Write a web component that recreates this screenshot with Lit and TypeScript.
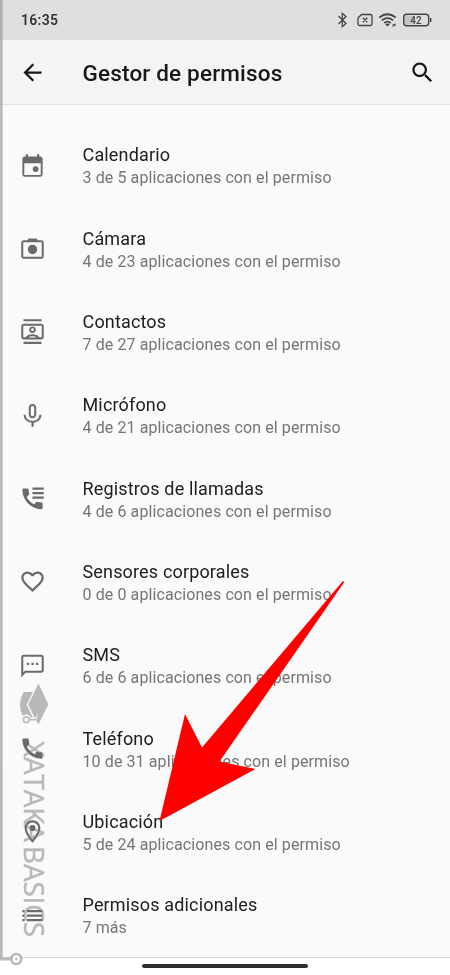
import { LitElement, html, css } from "lit";
import { customElement, property } from "lit/decorators.js";

const ICONS: Record<string, string> = {
  back: "M20 11H7.83l5.59-5.59L12 4l-8 8 8 8 1.41-1.41L7.83 13H20v-2z",
  search:
    "M15.5 14h-.79l-.28-.27C15.41 12.59 16 11.11 16 9.5 16 5.91 13.09 3 9.5 3S3 5.91 3 9.5 5.91 16 9.5 16c1.61 0 3.09-.59 4.23-1.57l.27.28v.79l5 4.99L20.49 19l-4.99-5zm-6 0C7.01 14 5 11.99 5 9.5S7.01 5 9.5 5 14 7.01 14 9.5 11.99 14 9.5 14z",
  calendar:
    "M19 4h-1V2h-2v2H8V2H6v2H5c-1.11 0-1.99.9-1.99 2L3 20c0 1.1.89 2 2 2h14c1.1 0 2-.9 2-2V6c0-1.1-.9-2-2-2zm0 16.500H4.700V10h14.600v10.500z M14.800 12.600a2.600 2.600 0 1 1 0 5.200a2.600 2.600 0 1 1 0-5.200z",
  camera:
    "M20 4.600h-3.170L15.500 3h-7L7.170 4.600H4c-1.100 0-2 .9-2 2v12.500c0 1.100.9 2 2 2h16c1.100 0 2-.9 2-2V6.600c0-1.100-.9-2-2-2zm.2 14.700H3.800V6.400h16.400v12.900z M12 8.600a4.200 4.200 0 1 0 0 8.400a4.200 4.200 0 1 0 0-8.400z",
  contacts:
    "M20 5H4c-1.100 0-2 .9-2 2v10c0 1.100.9 2 2 2h16c1.100 0 2-.9 2-2V7c0-1.100-.9-2-2-2zM8.500 17.300c.9-.7 2.100-1 3.500-1s2.600.3 3.500 1h-7zM20.200 17.200h-2.200c-.8-1.700-3.300-2.700-6-2.700s-5.200 1-6 2.700H3.800V6.800h16.400v10.400zM4 1h16v1.800H4zM4 21.200h16V23H4zM12 13.500c1.660 0 3-1.340 3-3s-1.340-3-3-3-3 1.340-3 3 1.340 3 3 3zm0-4.300c.7 0 1.300.6 1.300 1.300s-.6 1.300-1.300 1.300-1.300-.6-1.300-1.300.6-1.300 1.300-1.300z",
  mic: "M12 14.500c1.900 0 3.300-1.400 3.300-3.300V5c0-1.900-1.400-3.300-3.300-3.300S8.700 3.100 8.700 5v6.200c0 1.900 1.400 3.300 3.300 3.300zm-1.500-9.500c0-.9.6-1.500 1.500-1.500s1.500.6 1.500 1.500v6.200c0 .9-.6 1.500-1.500 1.500s-1.500-.6-1.500-1.500V5zM18.100 11.400c0 3.300-2.700 5.400-6.100 5.400s-6.100-2.100-6.100-5.400H4.100c0 3.700 2.900 6.500 7 7V22h1.900v-3.600c4.100-.5 7-3.300 7-7z",
  calls:
    "M12 2.300h10v1.900H12zM12 6.300h10v1.900H12zM12 10.300h10v1.900H12zM20 15.500c-1.250 0-2.450-.2-3.570-.57-.3-.1-.76-.02-1.020.24l-2 2c-2.830-1.440-5.150-3.750-6.590-6.580l2-2.010c.28-.27.36-.66.25-1.010C8.700 6.450 8.500 5.250 8.500 4c0-.55-.45-1-1-1H4c-.55 0-1 .45-1 1 0 9.390 7.610 17.500 17 17.500 .55 0 1-.45 1-1v-4c0-.55-.45-1-1-1z",
  heart:
    "M16.500 3c-1.740 0-3.410.81-4.500 2.090C10.910 3.810 9.240 3 7.500 3 4.420 3 2 5.420 2 8.500c0 3.780 3.400 6.860 8.550 11.540L12 21.350l1.450-1.320C18.600 15.360 22 12.280 22 8.500 22 5.420 19.580 3 16.500 3zm-4.400 15.550l-.1.100-.1-.1C7.140 14.240 4 11.390 4 8.500 4 6.500 5.500 5 7.500 5c1.540 0 3.040.99 3.570 2.360h1.870C13.460 5.990 14.960 5 16.500 5c2 0 3.500 1.500 3.500 3.500 0 2.890-3.140 5.740-7.900 10.050z",
  sms: "M20 2.500H4c-1.100 0-2 .9-2 2V22.500l4-4h14c1.100 0 2-.9 2-2v-12c0-1.100-.9-2-2-2zm.2 14.200H5.200L3.800 18V4.300h16.400v12.400zM7 9.500h2v2H7zM11 9.500h2v2h-2zM15 9.500h2v2h-2z",
  phone:
    "M20.010 15.380c-1.230 0-2.420-.2-3.530-.56-.35-.12-.74-.03-1.010.24l-1.570 1.970c-2.830-1.350-5.480-3.900-6.890-6.830l1.950-1.660c.27-.28.35-.67.24-1.020-.37-1.110-.56-2.300-.56-3.530 0-.54-.45-.99-.99-.99H4.190C3.650 3 3 3.240 3 3.990 3 13.280 10.730 21 20.010 21c.71 0 .99-.63.99-1.180v-3.450c0-.54-.45-.99-.99-.99z",
  place:
    "M12 2C8.100 2 5 5.100 5 9c0 5.250 7 13 7 13s7-7.750 7-13c0-3.900-3.100-7-7-7zM6.900 9c0-2.800 2.300-5.100 5.100-5.100s5.100 2.300 5.100 5.100c0 2.900-2.900 7.300-5.100 10.100C9.800 16.300 6.900 11.900 6.900 9zM12 6.300a2.700 2.700 0 1 0 0 5.400a2.700 2.700 0 1 0 0-5.400z",
  list: "M3 13h2v-2H3v2zm0 4h2v-2H3v2zm0-8h2V7H3v2zm4 4h14v-2H7v2zm0 4h14v-2H7v2zM7 7v2h14V7H7z",
};

const ROWS = [
  ["calendar", "Calendario", "3 de 5 aplicaciones con el permiso"],
  ["camera", "Cámara", "4 de 23 aplicaciones con el permiso"],
  ["contacts", "Contactos", "7 de 27 aplicaciones con el permiso"],
  ["mic", "Micrófono", "4 de 21 aplicaciones con el permiso"],
  ["calls", "Registros de llamadas", "4 de 6 aplicaciones con el permiso"],
  ["heart", "Sensores corporales", "0 de 0 aplicaciones con el permiso"],
  ["sms", "SMS", "6 de 6 aplicaciones con el permiso"],
  ["phone", "Teléfono", "10 de 31 aplicaciones con el permiso"],
  ["place", "Ubicación", "5 de 24 aplicaciones con el permiso"],
  ["list", "Permisos adicionales", "7 más"],
];

@customElement("glyph-icon")
export class GlyphIcon extends LitElement {
  @property() name = "";
  static styles = css`
    :host { display: block; width: 27px; height: 27px; }
    svg { display: block; width: 100%; height: 100%; overflow: visible; fill: currentColor; }
  `;
  render() {
    return html`<svg viewBox="0 0 24 24"><path fill-rule="evenodd" d=${ICONS[this.name] ?? ""}></path></svg>`;
  }
}

@customElement("permission-row")
export class PermissionRow extends LitElement {
  @property() icon = "";
  @property() heading = "";
  @property() detail = "";
  static styles = css`
    :host { display: flex; align-items: center; height: 83.33px; }
    glyph-icon { margin: 0 37px 3px 18.500px; color: #6b6b6b; flex: none; }
    .text { white-space: nowrap; }
    .heading { font-size: 18px; line-height: 23px; color: #202020; letter-spacing: 0.16px; }
    .detail { font-size: 16px; line-height: 23.500px; color: #757575; letter-spacing: 0.1px; }
  `;
  render() {
    return html`<glyph-icon name=${this.icon}></glyph-icon>
      <div class="text">
        <div class="heading">${this.heading}</div>
        <div class="detail">${this.detail}</div>
      </div>`;
  }
}

@customElement("app-root")
export class AppRoot extends LitElement {
  static styles = css`
    :host {
      display: flex; flex-direction: column; position: relative;
      width: 450px; height: 975px; overflow: hidden;
      background: #fff; font-family: Roboto, "Liberation Sans", sans-serif;
    }
    .status {
      flex: none; height: 40px; box-sizing: border-box; padding: 0 18px 0 21px;
      display: flex; align-items: center; justify-content: space-between;
      background: #dfdfdf; color: #333;
    }
    .time { font-size: 14px; font-weight: 600; letter-spacing: 0.3px; }
    .indicators { display: block; width: 96px; height: 20px; overflow: visible; }
    .level { font-size: 10px; font-weight: 500; fill: #444; }
    .bar {
      flex: none; height: 65px; box-sizing: border-box; padding: 0 14px 0 18.500px;
      display: flex; align-items: center; background: #f4f4f4; color: #181818;
      border-bottom: 1px solid #e2e2e2;
    }
    h1 { flex: 1; margin: 2px 0 0 37px; font-size: 22.500px; line-height: 28px; font-weight: 500; letter-spacing: 0.18px; white-space: nowrap; }
    .list { flex: none; height: 853px; box-sizing: border-box; padding-top: 19.900px; background: #fafafa; border-bottom: 1px solid #d8d8d8; overflow: hidden; }
    .nav { flex: 1; display: flex; justify-content: center; align-items: flex-start; padding-top: 5.500px; }
    .handle { width: 166px; height: 4.500px; border-radius: 2px; background: #303030; }
    .overlay { position: absolute; inset: 0; width: 450px; height: 975px; pointer-events: none; }
    .watermark { mix-blend-mode: darken; }
    .mark { font-family: "Open Sans", Roboto, sans-serif; font-size: 27.500px; word-spacing: -3px; fill: #b9b9b9; stroke: #b9b9b9; stroke-width: 0.500px; }
  `;
  render() {
    return html`
      <div class="status">
        <span class="time">16:35</span>
        <svg class="indicators" viewBox="336 10 96 20" fill="none" stroke="#444" stroke-width="1.300">
          <path d="M338.500 16l7.500 7.500-3.700 3.200V13.300l3.700 3.200-7.500 7.500"></path>
          <path d="M361.500 14.500h9q1.500 0 1.500 1.500v8q0 1.500-1.500 1.500h-11q-1.500 0-1.500-1.500v-6zM362.800 17.800l4.500 4.500m0-4.500l-4.500 4.500"></path>
          <path stroke-width="1.700" d="M379.300 17.500q8.200-6.500 16.400 0M381.800 20.400q5.700-4.500 11.400 0M384.200 23q3.300-2.600 6.600 0"></path>
          <path fill="#444" stroke="none" d="M385.200 24.200q2.300-1.500 4.600 0l-2.300 2.300z"></path>
          <path stroke-width=".8" d="M395.500 24l-3 1h3.200l-3.200 1.500"></path>
          <rect x="404.500" y="15.500" width="10" height="9" rx="1" fill="#c4c4c4" stroke="none"></rect>
          <rect x="403.700" y="14.300" width="25" height="11.400" rx="3" stroke-width="1.400"></rect>
          <path stroke-width="1.400" d="M430.700 18v4"></path>
          <text class="level" stroke="none" x="416" y="23.800" text-anchor="middle">42</text>
        </svg>
      </div>
      <div class="bar">
        <glyph-icon name="back"></glyph-icon>
        <h1>Gestor de permisos</h1>
        <glyph-icon name="search"></glyph-icon>
      </div>
      <div class="list">
        ${ROWS.map(([icon, heading, detail]) => html`<permission-row .icon=${icon} .heading=${heading} .detail=${detail}></permission-row>`)}
      </div>
      <div class="nav"><div class="handle"></div></div>
      <svg class="overlay watermark" viewBox="0 0 450 975">
        <path fill="#b9b9b9" d="M38.500 683.500L48.300 704.500 38.500 724.500 36.300 720.500 38 714 35 718.500 28.300 704.500z"></path>
        <path fill="#b9b9b9" d="M23.500 692h9.500l-6.200 12.500 6 13h-2.500a4.500 4.500 0 0 0-7.600-1.500q-5.800-12 .8-24z"></path>
        <circle cx="26.300" cy="719.700" r="2.900" fill="none" stroke="#b9b9b9" stroke-width="1.500"></circle>
        <path fill="none" stroke="#b9b9b9" stroke-width="1.500" d="M29.200 719.700h7"></path>
        <text class="mark" transform="translate(24 741) rotate(90)" textLength="196" lengthAdjust="spacingAndGlyphs">XATAKA BASICS</text>
      </svg>
      <svg class="overlay" viewBox="0 0 450 975">
        <g opacity=".67">
          <path fill="#999" d="M0 0h2.700v957.500h8.500v3H0z"></path>
          <circle cx="16.300" cy="959" r="5" fill="#fff" stroke="#999" stroke-width="2.700"></circle>
          <circle cx="16.300" cy="959" r="1.300" fill="#999"></circle>
        </g>
        <path fill="#f00" d="M342.500 581.500q1.500-.8 1.500 1L219.500 761.500l36 7.500-96 52 25.500-107 17 33.500z"></path>
      </svg>
    `;
  }
}
